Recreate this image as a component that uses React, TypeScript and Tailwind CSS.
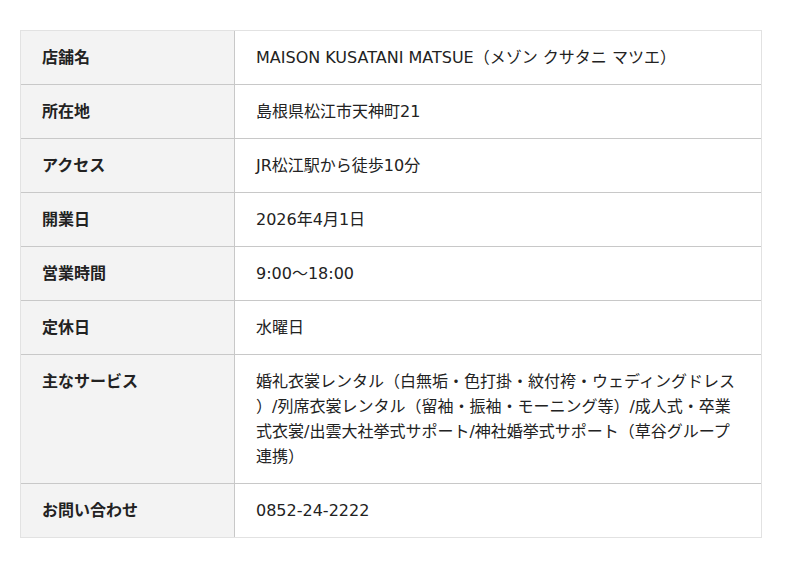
import React from 'react';

const rows: { label: string; value: React.ReactNode }[] = [
  { label: '店舗名', value: 'MAISON KUSATANI MATSUE（メゾン クサタニ マツエ）' },
  { label: '所在地', value: '島根県松江市天神町21' },
  { label: 'アクセス', value: 'JR松江駅から徒歩10分' },
  { label: '開業日', value: '2026年4月1日' },
  { label: '営業時間', value: '9:00〜18:00' },
  { label: '定休日', value: '水曜日' },
  {
    label: '主なサービス',
    value: (
      <>
        婚礼衣裳レンタル（白無垢・色打掛・紋付袴・ウェディングドレス
        <br />
        ）/列席衣裳レンタル（留袖・振袖・モーニング等）/成人式・卒業
        <br />
        式衣裳/出雲大社挙式サポート/神社婚挙式サポート（草谷グループ
        <br />
        連携）
      </>
    ),
  },
  { label: 'お問い合わせ', value: '0852-24-2222' },
];

export default function App() {
  return (
    <div className="min-h-[568px] bg-white pt-[30px] pl-[20px] font-['DejaVu_Sans','Noto_Sans_CJK_JP',sans-serif] text-[16px] leading-[25px] text-[#222]">
      <div className="w-[742px] border border-[#e2e2e2]">
        {rows.map((row, i) => (
          <div key={i} className={`flex ${i > 0 ? 'border-t border-[#c8c8c8]' : ''}`}>
            <div className="w-[214px] shrink-0 bg-[#f3f3f3] border-r border-[#c8c8c8] px-[21px] pt-[14px] pb-[14px] font-bold">
              {row.label}
            </div>
            <div className="flex-1 px-[21px] pt-[14px] pb-[14px] whitespace-nowrap">{row.value}</div>
          </div>
        ))}
      </div>
    </div>
  );
}
